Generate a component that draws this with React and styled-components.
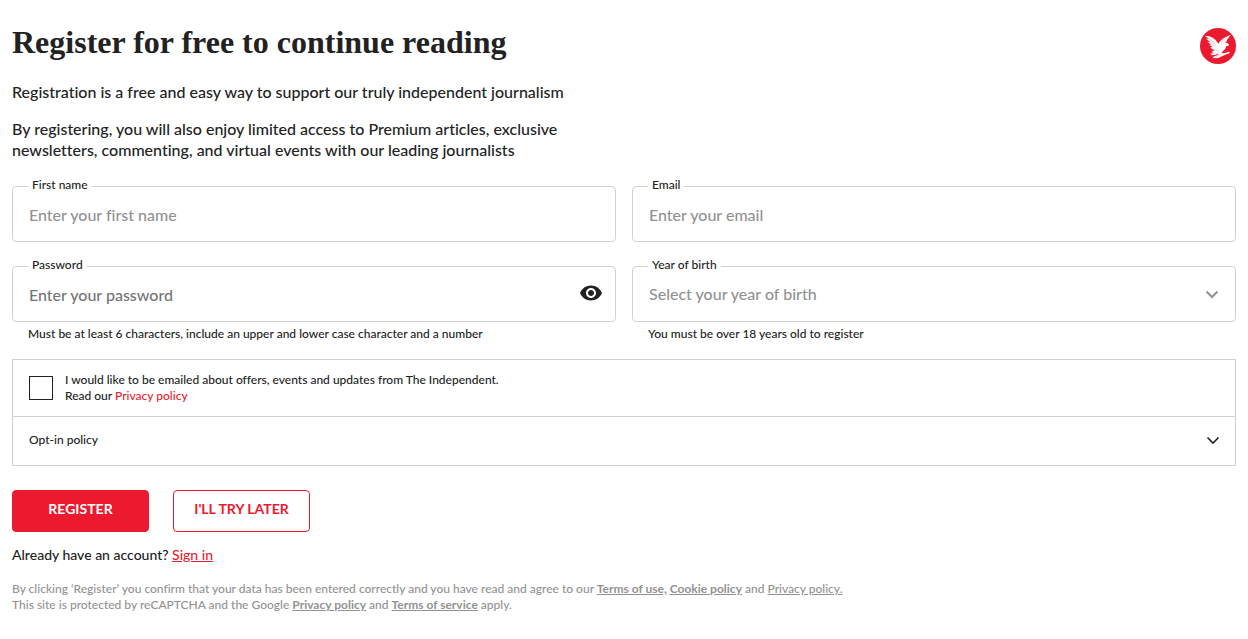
import React from "react";
import styled, { createGlobalStyle, css } from "styled-components";

const GlobalStyle = createGlobalStyle`
  *, *::before, *::after { box-sizing: border-box; }
  body {
    margin: 0;
    background: #fff;
    color: #222;
    font-family: Lato, "Open Sans", sans-serif;
    font-weight: 500;
    font-variant-ligatures: none;
  }
`;

const Page = styled.main`
  padding: 24px 12px;
`;

const Header = styled.header`
  display: flex;
  justify-content: space-between;
  align-items: flex-start;
  margin-bottom: 17px;
`;

const Title = styled.h1`
  margin: 0;
  font: 700 32px/37px "Liberation Serif", serif;
`;

const Logo = styled.svg`
  flex: none;
  width: 36px;
  height: 36px;
  margin-top: 4px;
`;

const Intro = styled.p`
  max-width: 600px;
  margin: 0 0 16px;
  font-size: 16px;
  line-height: 21px;
`;

const Fields = styled.div`
  display: grid;
  grid-template-columns: 1fr 1fr;
  gap: 24px 16px;
  margin-top: 26px;
`;

const Field = styled.div`
  position: relative;
`;

const Label = styled.label`
  position: absolute;
  top: -8px;
  left: 16px;
  padding: 0 4px;
  background: #fff;
  font-size: 12px;
  line-height: 14px;
`;

const control = css`
  display: block;
  width: 100%;
  height: 56px;
  padding: 0 16px;
  border: 1px solid #d1d1d1;
  border-radius: 4px;
  background: #fff;
  font: 500 16px/20px Lato, "Open Sans", sans-serif;
  font-variant-ligatures: none;
  outline-color: #222;
`;

const Input = styled.input`
  ${control}
  color: #222;
  &::placeholder {
    color: ${(p) => (p.$dark ? "#757575" : "#929292")};
    opacity: 1;
  }
`;

const Select = styled.select`
  ${control}
  appearance: none;
  color: #929292;
`;

const Reveal = styled.button`
  position: absolute;
  top: 14px;
  right: 12px;
  width: 26px;
  height: 26px;
  padding: 1px;
  border: 0;
  background: none;
  svg { display: block; width: 24px; height: 24px; }
`;

const SelectArrow = styled.svg`
  position: absolute;
  top: 20px;
  right: 16px;
  width: 16px;
  height: 16px;
  pointer-events: none;
`;

const Hint = styled.p`
  margin: 4px 16px 0;
  font-size: 12px;
  line-height: 16px;
`;

const Consent = styled.section`
  margin-top: 17px;
  border: 1px solid #d1d1d1;
`;

const ConsentRow = styled.div`
  display: flex;
  align-items: center;
  gap: 12px;
  padding: 12px 16px;
  font-size: 12px;
  line-height: 16px;
`;

const Checkbox = styled.input`
  flex: none;
  appearance: none;
  width: 24px;
  height: 24px;
  margin: 0;
  border: 1px solid #222;
  background: #fff;
  &:checked { background: #222; box-shadow: inset 0 0 0 4px #fff; }
`;

const PolicyToggle = styled.button`
  display: flex;
  justify-content: space-between;
  align-items: center;
  width: 100%;
  height: 49px;
  padding: 0 14px 2px 16px;
  border: 0;
  border-top: 1px solid #d1d1d1;
  background: #fff;
  color: #222;
  font: 500 12px/16px Lato, "Open Sans", sans-serif;
  svg { width: 16px; height: 16px; }
`;

const Actions = styled.div`
  display: flex;
  gap: 24px;
  margin-top: 24px;
`;

const Button = styled.button`
  width: 137px;
  height: 42px;
  padding: 0 8px 4px;
  border: 1px solid #ec1a2e;
  border-radius: 4px;
  background: ${(p) => (p.$primary ? "#ec1a2e" : "#fff")};
  color: ${(p) => (p.$primary ? "#fff" : "#ec1a2e")};
  font: 700 14px/18px Lato, "Open Sans", sans-serif;
`;

const SignIn = styled.p`
  margin: 14px 0 17px;
  font-size: 14px;
  line-height: 18px;
`;

const Legal = styled.p`
  margin: 0;
  color: #929292;
  font-size: 12px;
  line-height: 16px;
`;

const Link = styled.a`
  color: ${(p) => (p.$muted ? "inherit" : "#ec1a2e")};
  font-weight: ${(p) => (p.$bold ? 700 : "inherit")};
  text-decoration: ${(p) => (p.$plain ? "none" : "underline")};
`;

const EagleLogo = () => (
  <Logo viewBox="0 0 108 108" role="img" aria-label="The Independent">
    <circle cx="54" cy="54" r="54" fill="#ec1a2e" />
    <path
      fill="#fff"
      d="M15 23 L28 25 L38 29 L47 36 L55 47 L60 40 L68 32 L79 26 L92 20 L86 29 L82 34 L79 41 L75 45 Q84 43 87 51 L84 55 L79 53 L77 61 L70 68 L64 75 L72 76 L87 71 L90 75 L72 82 L55 90 L40 91 L38 87 L53 81 L55 76 L47 80 L36 82 L31 78 L41 74 L34 72 L44 67 L36 63 L31 58 L38 57 L27 50 L34 50 L22 41 L31 42 L18 32 L26 33 Z"
    />
    <path
      fill="none"
      stroke="#ec1a2e"
      strokeWidth="2"
      opacity=".35"
      d="M24 29 L45 46 M30 38 L47 51 M34 46 L49 57 M63 44 L80 31 M65 50 L77 40 M48 66 L58 70 M46 87 L62 79"
    />
  </Logo>
);

const EyeIcon = () => (
  <svg viewBox="0 0 24 24" aria-hidden="true">
    <path
      fill="#222"
      d="M12 4.5C7 4.5 2.73 7.61 1 12c1.73 4.39 6 7.5 11 7.5s9.27-3.11 11-7.5c-1.73-4.39-6-7.5-11-7.5zM12 17c-2.76 0-5-2.24-5-5s2.24-5 5-5 5 2.24 5 5-2.24 5-5 5zm0-8c-1.66 0-3 1.34-3 3s1.34 3 3 3 3-1.34 3-3-1.34-3-3-3z"
    />
  </svg>
);

const Chevron = ({ color, width }) => (
  <path d="M2.5 5.5 L8 11 L13.5 5.5" fill="none" stroke={color} strokeWidth={width} />
);

export default function App() {
  return (
    <>
      <GlobalStyle />
      <Page>
        <Header>
          <Title>Register for free to continue reading</Title>
          <EagleLogo />
        </Header>
        <Intro>Registration is a free and easy way to support our truly independent journalism</Intro>
        <Intro>
          By registering, you will also enjoy limited access to Premium articles, exclusive
          <br />
          newsletters, commenting, and virtual events with our leading journalists
        </Intro>

        <form onSubmit={(e) => e.preventDefault()}>
          <Fields>
            <Field>
              <Input id="first-name" placeholder="Enter your first name" />
              <Label htmlFor="first-name">First name</Label>
            </Field>
            <Field>
              <Input id="email" type="email" placeholder="Enter your email" />
              <Label htmlFor="email">Email</Label>
            </Field>
            <Field>
              <Input id="password" type="password" $dark placeholder="Enter your password" aria-describedby="password-hint" />
              <Label htmlFor="password">Password</Label>
              <Reveal type="button" aria-label="Show password">
                <EyeIcon />
              </Reveal>
              <Hint id="password-hint">
                Must be at least 6 characters, include an upper and lower case character and a number
              </Hint>
            </Field>
            <Field>
              <Select id="birth-year" defaultValue="" aria-describedby="birth-hint">
                <option value="">Select your year of birth</option>
              </Select>
              <Label htmlFor="birth-year">Year of birth</Label>
              <SelectArrow viewBox="0 0 16 16" aria-hidden="true">
                <Chevron color="#929292" width="2" />
              </SelectArrow>
              <Hint id="birth-hint">You must be over 18 years old to register</Hint>
            </Field>
          </Fields>

          <Consent>
            <ConsentRow>
              <Checkbox id="offers" type="checkbox" />
              <label htmlFor="offers">
                I would like to be emailed about offers, events and updates from The Independent.
                <br />
                Read our <Link href="#privacy" $plain>Privacy policy</Link>
              </label>
            </ConsentRow>
            <PolicyToggle type="button" aria-expanded="false">
              Opt-in policy
              <svg viewBox="0 0 16 16" aria-hidden="true">
                <Chevron color="#222" width="1.6" />
              </svg>
            </PolicyToggle>
          </Consent>

          <Actions>
            <Button type="submit" $primary>REGISTER</Button>
            <Button type="button">I'LL TRY LATER</Button>
          </Actions>
        </form>

        <SignIn>
          Already have an account? <Link href="#sign-in">Sign in</Link>
        </SignIn>
        <Legal>
          By clicking ‘Register’ you confirm that your data has been entered correctly and you have read and agree to our{" "}
          <Link href="#terms" $muted $bold>Terms of use,</Link>{" "}
          <Link href="#cookies" $muted $bold>Cookie policy</Link> and{" "}
          <Link href="#privacy" $muted>Privacy policy.</Link>
          <br />
          This site is protected by reCAPTCHA and the Google{" "}
          <Link href="#google-privacy" $muted $bold>Privacy policy</Link> and{" "}
          <Link href="#google-terms" $muted $bold>Terms of service</Link> apply.
        </Legal>
      </Page>
    </>
  );
}
